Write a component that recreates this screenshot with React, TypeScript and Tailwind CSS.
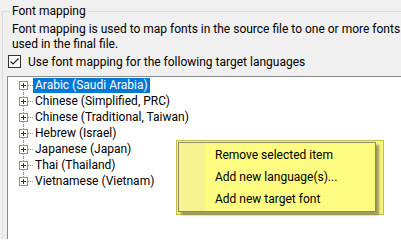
import React from "react";

const font = { fontFamily: 'Roboto, "Noto Sans", sans-serif' };

const langs = [
  "Arabic (Saudi Arabia)",
  "Chinese (Simplified, PRC)",
  "Chinese (Traditional, Taiwan)",
  "Hebrew (Israel)",
  "Japanese (Japan)",
  "Thai (Thailand)",
  "Vietnamese (Vietnam)",
];

function Expander({ first, last }: { first: boolean; last: boolean }) {
  return (
    <div className="relative w-[25px] h-[16px] shrink-0">
      {!first && (
        <div className="absolute left-[15px] top-0 h-[4px] border-l border-dotted border-[#a0a0a0]" />
      )}
      {!last && (
        <div className="absolute left-[15px] top-[13px] h-[3px] border-l border-dotted border-[#a0a0a0]" />
      )}
      <div className="absolute left-[20px] top-[8px] w-[5px] border-t border-dotted border-[#a0a0a0]" />
      <svg
        className="absolute left-[11px] top-[4px]"
        width="9"
        height="9"
        viewBox="0 0 9 9"
      >
        <rect x="0.5" y="0.5" width="8" height="8" fill="#fff" stroke="#8f8f8f" />
        <line x1="2" y1="4.5" x2="7" y2="4.5" stroke="#1c3a8c" />
        <line x1="4.5" y1="2" x2="4.5" y2="7" stroke="#1c3a8c" />
      </svg>
    </div>
  );
}

export default function App() {
  return (
    <div
      className="relative w-[401px] h-[239px] overflow-hidden bg-[#f0f0f0] text-[12px] text-black"
      style={font}
    >
      <fieldset className="ml-[2px] mt-[3px] w-[440px] h-[300px] border border-[#dcdcdc] pl-[9px]">
        <legend className="px-[2px] -ml-[2px] leading-[16px]">Font mapping</legend>
        <div className="leading-[15px] whitespace-nowrap mt-[3px]">
          <div>Font mapping is used to map fonts in the source file to one or more fonts in</div>
          <div>used in the final file.</div>
        </div>
        <div className="flex items-center -ml-[4px] mt-[3px] h-[13px]">
          <svg width="13" height="13" viewBox="0 0 13 13" className="shrink-0">
            <rect x="0.5" y="0.5" width="12" height="12" fill="#fff" stroke="#333" />
            <path d="M2.5 6.5 L5 9 L10.5 3.5" fill="none" stroke="#222" strokeWidth="1.2" />
          </svg>
          <span className="ml-[7px] whitespace-nowrap">Use font mapping for the following target languages</span>
        </div>
        <div className="-ml-[5px] mt-[8px] w-[420px] h-[200px] bg-white border border-[#8a8a8a]">
          {langs.map((l, i) => (
            <div key={l} className="flex items-center h-[16px]">
              <Expander first={i === 0} last={i === langs.length - 1} />
              <span
                className={
                  "whitespace-nowrap px-[2px] h-[15px] leading-[15px] " +
                  (i === 0 ? "bg-[#0078d7] text-white" : "")
                }
              >
                {l}
              </span>
            </div>
          ))}
        </div>
      </fieldset>

      <div className="absolute left-[176px] top-[140px] w-[208px] h-[75px] bg-[#f8f67a] border border-[#c4bf40] p-[1px]">
        <div className="relative w-[198px] h-[70px] border border-[#8b8a70] bg-[#fdfc80] shadow-[3px_3px_2px_rgba(80,80,80,0.55)] flex">
          <div className="w-[26px] h-full bg-[#f7f390]" />
          <div className="flex flex-col pt-[1px] pl-[10px] whitespace-nowrap">
            <div className="h-[22px] leading-[22px]">Remove selected item</div>
            <div className="h-[22px] leading-[22px]">Add new language(s)...</div>
            <div className="h-[22px] leading-[22px]">Add new target font</div>
          </div>
        </div>
      </div>
    </div>
  );
}
